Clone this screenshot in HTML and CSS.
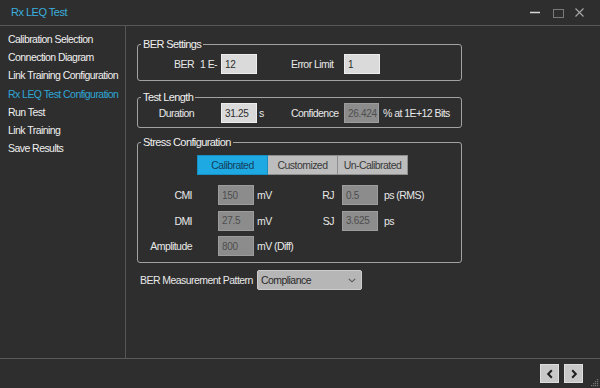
FILE: index.html
```html
<!DOCTYPE html>
<html>
<head>
<meta charset="utf-8">
<link rel="stylesheet" href="styles.css">
</head>
<body>
<div class="window">
  <div class="titlebar">
    <span class="title">Rx LEQ Test</span>
    <svg class="winctl" width="60" height="25" viewBox="0 0 60 25">
      <line x1="3" y1="12.5" x2="13" y2="12.5" stroke="#d8d8d8" stroke-width="1.5"/>
      <rect x="26.5" y="9.5" width="10" height="8" fill="none" stroke="#7a7a7a" stroke-width="1"/>
      <path d="M48.5 8.5 L56.5 16.5 M56.5 8.5 L48.5 16.5" stroke="#a8a8a8" stroke-width="1.1" fill="none"/>
    </svg>
  </div>
  <div class="content">
    <nav class="sidebar">
      <div class="nav-item">Calibration Selection</div>
      <div class="nav-item">Connection Diagram</div>
      <div class="nav-item">Link Training Configuration</div>
      <div class="nav-item active">Rx LEQ Test Configuration</div>
      <div class="nav-item">Run Test</div>
      <div class="nav-item">Link Training</div>
      <div class="nav-item">Save Results</div>
    </nav>
    <main class="main">
      <fieldset class="group group-ber">
        <legend>BER Settings</legend>
        <div class="row">
          <span class="lbl">BER</span>
          <span class="prefix">1 E-</span>
          <input class="field" value="12">
          <span class="unit"></span>
          <span class="lbl2">Error Limit</span>
          <input class="field" value="1">
          <span class="unit2"></span>
        </div>
      </fieldset>
      <fieldset class="group group-len">
        <legend>Test Length</legend>
        <div class="row">
          <span class="lbl">Duration</span>
          <span class="prefix"></span>
          <input class="field" value="31.25">
          <span class="unit">s</span>
          <span class="lbl2">Confidence</span>
          <input class="field off narrow" value="26.424" readonly>
          <span class="unit2">% at 1E+12 Bits</span>
        </div>
      </fieldset>
      <fieldset class="group group-stress">
        <legend>Stress Configuration</legend>
        <div class="segments">
          <div class="seg on">Calibrated</div>
          <div class="seg">Customized</div>
          <div class="seg">Un-Calibrated</div>
        </div>
        <div class="stress-grid">
          <span class="slbl">CMI</span>
          <input class="field off" value="150" readonly>
          <span class="sunit">mV</span>
          <span class="slbl2">RJ</span>
          <input class="field off" value="0.5" readonly>
          <span class="sunit2">ps (RMS)</span>

          <span class="slbl">DMI</span>
          <input class="field off" value="27.5" readonly>
          <span class="sunit">mV</span>
          <span class="slbl2">SJ</span>
          <input class="field off" value="3.625" readonly>
          <span class="sunit2">ps</span>

          <span class="slbl">Amplitude</span>
          <input class="field off" value="800" readonly>
          <span class="sunit">mV (Diff)</span>
          <span class="slbl2"></span>
          <span></span>
          <span></span>
        </div>
      </fieldset>
      <div class="pattern">
        <span class="plbl">BER Measurement Pattern</span>
        <div class="combo">
          <span>Compliance</span>
          <svg width="8" height="5" viewBox="0 0 8 5"><path d="M0.8 0.8 L4 3.8 L7.2 0.8" fill="none" stroke="#555" stroke-width="1.1"/></svg>
        </div>
      </div>
    </main>
  </div>
  <footer class="footer">
    <div class="navbtn">
      <svg width="8" height="10" viewBox="0 0 8 10"><path d="M5.8 1.2 L2.2 5 L5.8 8.8" fill="none" stroke="#1e1e1e" stroke-width="2"/></svg>
    </div>
    <div class="navbtn">
      <svg width="8" height="10" viewBox="0 0 8 10"><path d="M2.2 1.2 L5.8 5 L2.2 8.8" fill="none" stroke="#1e1e1e" stroke-width="2"/></svg>
    </div>
    <svg class="grip" width="8" height="8" viewBox="0 0 8 8">
      <rect x="6" y="0" width="1.2" height="1.2" fill="#777"/>
      <rect x="4" y="2" width="1.2" height="1.2" fill="#777"/>
      <rect x="6" y="2" width="1.2" height="1.2" fill="#777"/>
      <rect x="2" y="4" width="1.2" height="1.2" fill="#777"/>
      <rect x="4" y="4" width="1.2" height="1.2" fill="#777"/>
      <rect x="6" y="4" width="1.2" height="1.2" fill="#777"/>
      <rect x="0" y="6" width="1.2" height="1.2" fill="#777"/>
      <rect x="2" y="6" width="1.2" height="1.2" fill="#777"/>
      <rect x="4" y="6" width="1.2" height="1.2" fill="#777"/>
      <rect x="6" y="6" width="1.2" height="1.2" fill="#777"/>
    </svg>
  </footer>
</div>
</body>
</html>
```
FILE: styles.css
```css
* { box-sizing: border-box; }
html, body {
  margin: 0;
  padding: 0;
  background: #2e2e2e;
}
body {
  font-family: "Liberation Sans", Arial, sans-serif;
  font-size: 10.5px;
  letter-spacing: -0.55px;
  color: #e8e8e8;
}
.window {
  width: 600px;
  height: 388px;
  display: flex;
  flex-direction: column;
  overflow: hidden;
}
.titlebar {
  height: 26px;
  border-bottom: 1px solid #585858;
  display: flex;
  align-items: center;
  padding-left: 11px;
}
.title {
  color: #3aaede;
  font-size: 11px;
  letter-spacing: -0.5px;
  padding-bottom: 1px;
}
.winctl {
  margin-left: auto;
  margin-right: 13px;
}
.content {
  flex: 1;
  display: flex;
  min-height: 0;
}
.sidebar {
  width: 126px;
  border-right: 1px solid #555;
  padding: 4px 0 0 8px;
}
.nav-item {
  line-height: 18.2px;
  white-space: nowrap;
  color: #f0f0f0;
}
.nav-item.active { color: #2ea6d6; }
.main {
  flex: 1;
  padding: 12px 0 0 11px;
  display: flex;
  flex-direction: column;
  align-items: flex-start;
}
.group {
  width: 325px;
  margin: 0;
  padding: 0;
  border: 1px solid #a2a2a2;
  border-radius: 3px;
  min-inline-size: 0;
}
.group legend {
  margin-left: 3px;
  padding: 0 2px;
  font-size: 11px;
  letter-spacing: -0.6px;
  line-height: 12px;
  color: #f0f0f0;
}
.group-ber { padding: 4px 0 6px; }
.group-len { padding: 0 0 4px; margin-top: 10px; }
.group-stress { padding: 7px 0 6px; margin-top: 8px; }

.row {
  display: grid;
  grid-template-columns: 56px 27px 36px 34px 53px 36px auto;
  align-items: center;
  height: 20px;
}
.lbl { text-align: right; }
.prefix { padding-left: 6px; }
.unit { padding-left: 2px; }
.unit2 { padding-left: 3px; white-space: nowrap; }

.field {
  height: 20px;
  width: 36px;
  margin: 0;
  padding: 0 0 0 3px;
  font-family: "Liberation Sans", Arial, sans-serif;
  font-size: 10px;
  letter-spacing: -0.3px;
  color: #2c2c2c;
  background: #dadada;
  border: 1px solid #ededed;
  border-radius: 0;
  outline: none;
}
.field.narrow { width: 35px; }
.field.off {
  background: #8c8c8c;
  border: 1px solid #9c9c9c;
  color: #4e4e4e;
}

.segments {
  display: flex;
  margin-left: 59px;
  height: 20px;
}
.seg {
  width: 70px;
  height: 20px;
  display: flex;
  align-items: center;
  justify-content: center;
  background: #bdbdbd;
  color: #3a3a3a;
  border: 1px solid #8e8e8e;
  border-left: none;
}
.seg.on {
  width: 71px;
  background: #1fa9e2;
  color: #13405e;
  border: 1px solid #168fc4;
}
.stress-grid {
  margin-top: 10px;
  display: grid;
  grid-template-columns: 54px 26px 36px 60px 20px 8px 36px auto;
  grid-auto-rows: 20px;
  row-gap: 5.5px;
  align-items: center;
}
.stress-grid .slbl { grid-column: 1; text-align: right; }
.stress-grid > :nth-child(6n+2) { grid-column: 3; }
.stress-grid > :nth-child(6n+3) { grid-column: 4; }
.stress-grid > :nth-child(6n+4) { grid-column: 5; }
.stress-grid > :nth-child(6n+5) { grid-column: 7; }
.stress-grid > :nth-child(6n+6) { grid-column: 8; }
.sunit { padding-left: 3px; white-space: nowrap; }
.slbl2 { text-align: right; }
.sunit2 { padding-left: 6px; white-space: nowrap; }

.pattern {
  margin-top: 7px;
  display: flex;
  align-items: center;
  padding-left: 3px;
}
.plbl { width: 117px; white-space: nowrap; }
.combo {
  width: 105px;
  height: 20px;
  background: #b6b6b6;
  border: 1px solid #cdcdcd;
  border-radius: 2px;
  display: flex;
  align-items: center;
  justify-content: space-between;
  padding: 0 5px 0 3px;
  color: #2a2a2a;
}
.footer {
  position: relative;
  height: 30px;
  border-top: 1px solid #595959;
  display: flex;
  justify-content: flex-end;
  gap: 5px;
  padding: 5px 17px 0 0;
}
.navbtn {
  width: 19px;
  height: 19px;
  background: #c8c8c8;
  border: 1px solid #dedede;
  display: flex;
  align-items: center;
  justify-content: center;
}
.grip {
  position: absolute;
  right: 1px;
  bottom: 1px;
}
```
